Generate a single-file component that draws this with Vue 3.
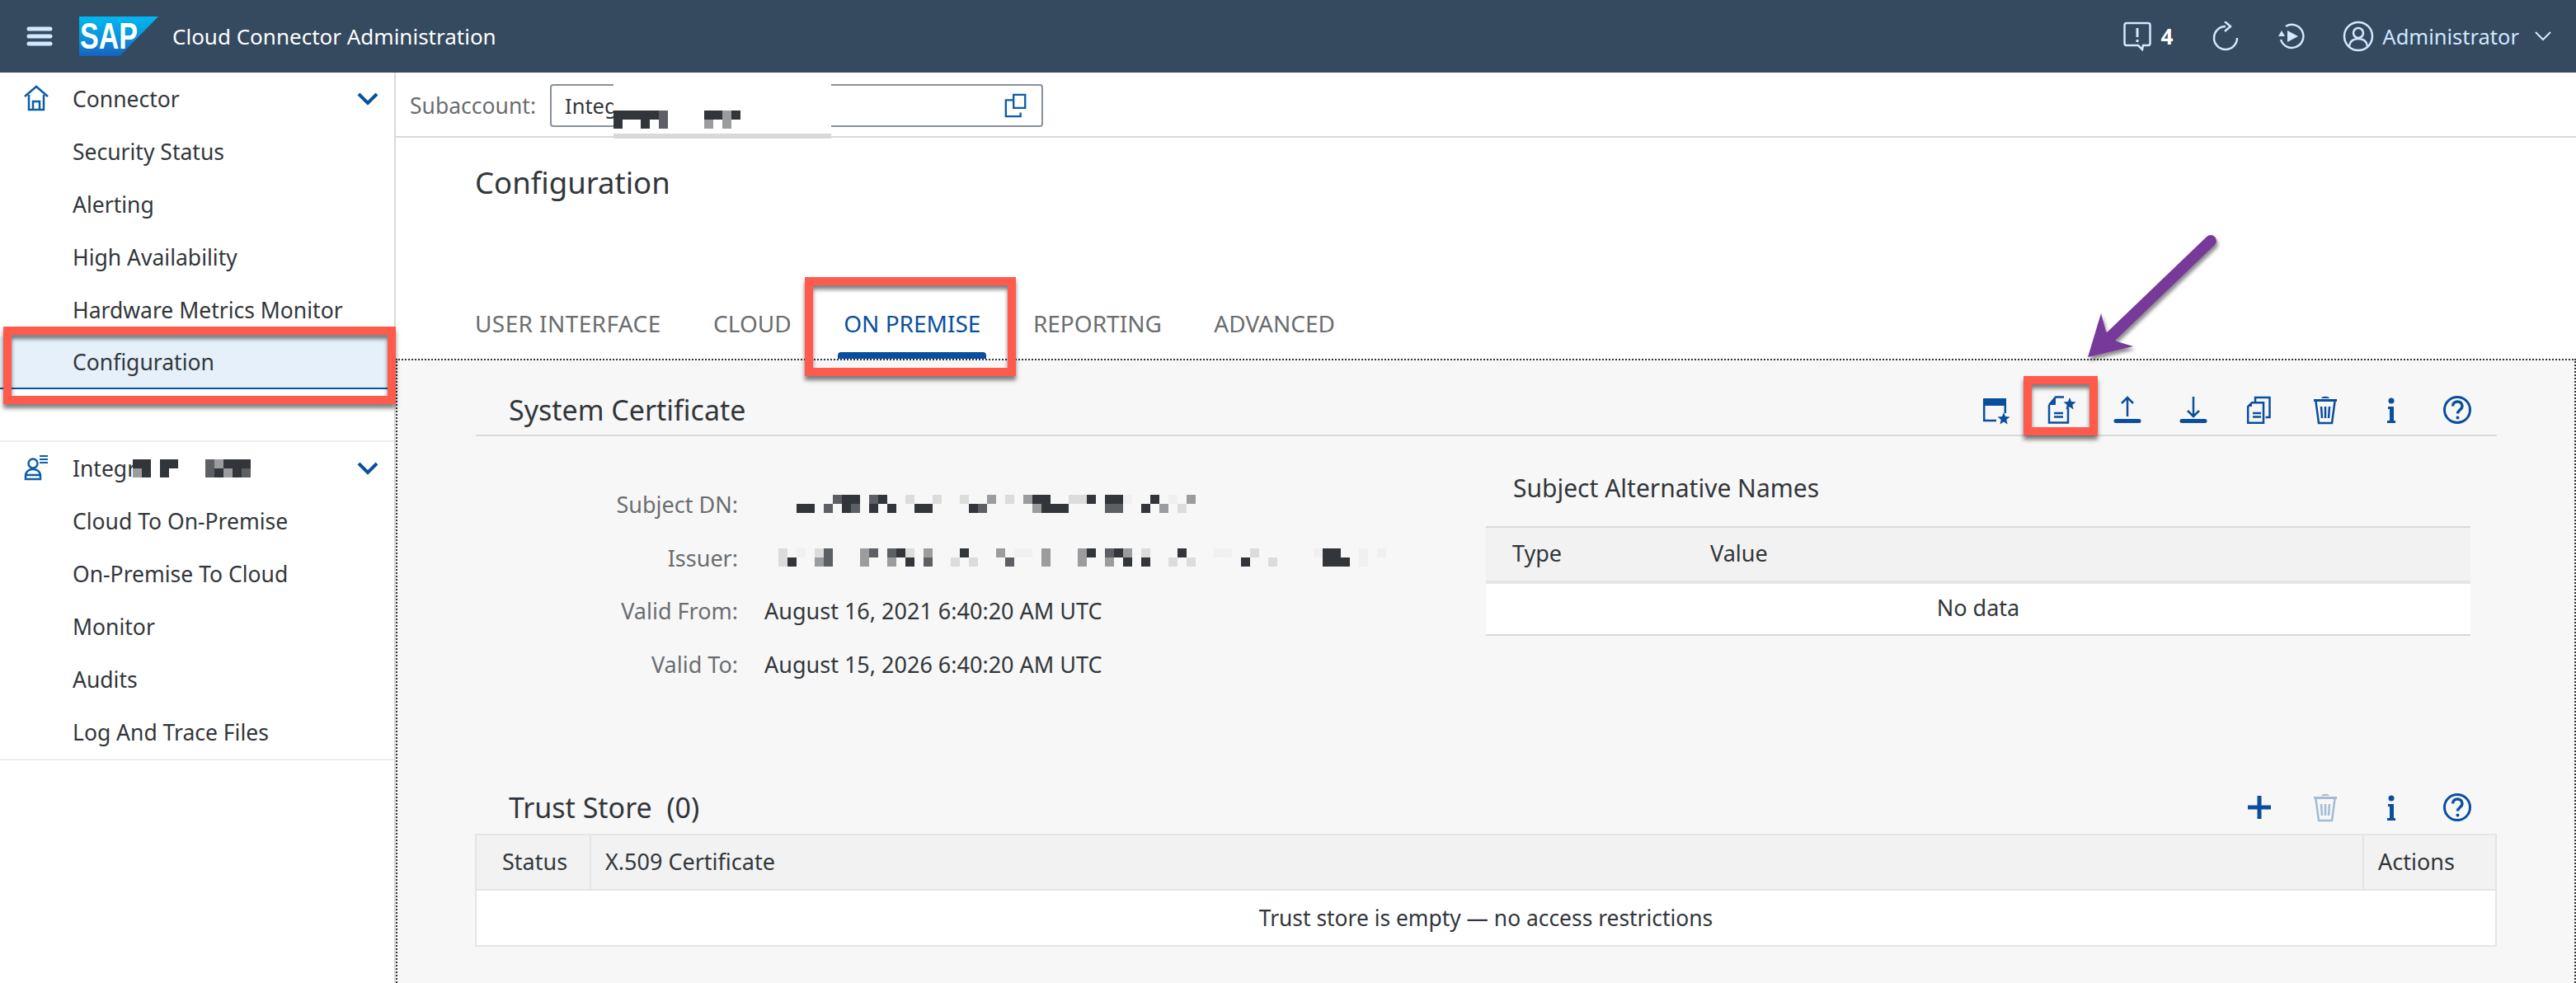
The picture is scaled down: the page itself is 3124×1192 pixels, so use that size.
<script setup>
const palette = { d: '#32363a', g: '#5c5f63', m: '#9a9c9e', l: '#dcdcdc', v: '#f0f0f0', '.': 'transparent' }
const cellsOf = (rows) => rows.flatMap((row) => [...row].map((c) => palette[c]))
const mosaics = {
  sub: { cols: 14, cells: cellsOf(['dddddg....ddmd', 'd..d.g....m.m.']) },
  integ: { cols: 13, cells: cellsOf(['dd.dd...gmddd', 'md.d....gdmdg']) },
  dn: { cols: 44, cells: cellsOf(['....gdd.gd..l..l..l..m.l.mdd..lld.ddv..d.v.m', 'dd.g.dg.d.d..dd....dg.....mddd....gg..d.m.l.']) },
  issuer: { cols: 67, cells: cellsOf(['l.v.lg...mg.gdl.m...d...m.vv.m...md.gdm.l...d...vv..l......vdd..v.v', 'ld..mg...m..m.d.g..l.l...g...m...m..m.d.d..l.l.....d..l.....ddd.v..']) },
}
const gridStyle = (m) => ({ gridTemplateColumns: `repeat(${m.cols}, 11px)` })
const connectorItems = ['Security Status', 'Alerting', 'High Availability', 'Hardware Metrics Monitor', 'Configuration']
const integItems = ['Cloud To On-Premise', 'On-Premise To Cloud', 'Monitor', 'Audits', 'Log And Trace Files']
const tabs = ['USER INTERFACE', 'CLOUD', 'ON PREMISE', 'REPORTING', 'ADVANCED']
</script>

<template>
  <div class="page">
    <header class="shell">
      <svg class="burger" viewBox="0 0 32 24"><path d="M3 3h26M3 12h26M3 21h26" /></svg>
      <svg class="logo" viewBox="0 0 96 48">
        <defs><linearGradient id="sapg" x1="0" y1="0" x2="0" y2="1"><stop offset="0" stop-color="#00b8f1" /><stop offset="0.6" stop-color="#0a8fdc" /><stop offset="1" stop-color="#1661be" /></linearGradient></defs>
        <path d="M0 0h96L49 48H0z" fill="url(#sapg)" />
        <text x="1" y="39" class="logo-text" textLength="70" lengthAdjust="spacingAndGlyphs">SAP</text>
      </svg>
      <span class="shell-title">Cloud Connector Administration</span>
      <div class="shell-right">
        <svg class="sh-icon" viewBox="0 0 36 36"><path d="M5 2h26a2.500 2.500 0 0 1 2.500 2.500v22a2.500 2.500 0 0 1-2.500 2.500h-6l-1 5-5-5H5a2.500 2.500 0 0 1-2.500-2.500v-22A2.500 2.500 0 0 1 5 2z" /><path d="M18 8v11M18 22v3" stroke-width="3" /></svg>
        <b class="count">4</b>
        <svg class="sh-icon refresh" viewBox="0 0 36 36"><path d="M32 20A14 14 0 1 1 18 6" /><path d="M17 0l7 6-7 6" /></svg>
        <svg class="sh-icon replay" viewBox="0 0 36 36"><path d="M11 6A14 14 0 1 1 5 22" /><path d="M13 11l13 7-13 7z" class="fill" /><path d="M2 18l4-7 4 7z" class="fill" /></svg>
        <svg class="sh-icon user" viewBox="0 0 38 38"><circle cx="19" cy="19" r="17" /><circle cx="19" cy="15" r="6" /><path d="M8 31c1-7 6-9 11-9s10 2 11 9" /></svg>
        <span class="admin">Administrator</span>
        <svg class="sh-chev" viewBox="0 0 20 12"><path d="M1 1l9 9 9-9" /></svg>
      </div>
    </header>

    <div class="body">
      <aside class="side">
        <section class="side-group">
          <div class="side-head">
            <svg class="side-icon" viewBox="0 0 32 32"><path d="M2 14L16 2l14 12M7 12v18h18V12M12 30V20h8v10" /></svg>
            <span>Connector</span>
            <svg class="side-chev" viewBox="0 0 26 16"><path d="M2 2l11 11L24 2" /></svg>
          </div>
          <div v-for="item in connectorItems" :key="item" class="side-item" :class="{ selected: item === 'Configuration' }">{{ item }}</div>
        </section>
        <section class="side-group second">
          <div class="side-head">
            <svg class="side-icon" viewBox="0 0 32 32"><circle cx="12" cy="11" r="5.500" /><path d="M3 30v-4c0-5 4-8 9-8s9 3 9 8v4zM3 25h18" /><path d="M20 2h10M20 6h10M20 10h10" stroke-width="2" /></svg>
            <span class="integ-name">Integr</span>
            <div class="mosaic" :style="gridStyle(mosaics.integ)"><i v-for="(c, i) in mosaics.integ.cells" :key="i" :style="{ background: c }" /></div>
            <svg class="side-chev" viewBox="0 0 26 16"><path d="M2 2l11 11L24 2" /></svg>
          </div>
          <div v-for="item in integItems" :key="item" class="side-item">{{ item }}</div>
        </section>
      </aside>

      <main class="main">
        <div class="subbar">
          <label>Subaccount:</label>
          <div class="select">
            <span class="select-text">Integ</span>
            <svg class="copy-icon" viewBox="0 0 30 32"><path d="M12 2h15v17H12zM12 9H2v21h19v-5" /></svg>
            <div class="patch"><div class="mosaic" :style="gridStyle(mosaics.sub)"><i v-for="(c, i) in mosaics.sub.cells" :key="i" :style="{ background: c }" /></div></div>
          </div>
        </div>
        <div class="page-head">
          <h1>Configuration</h1>
          <nav class="tabs">
            <a v-for="t in tabs" :key="t" :class="{ active: t === 'ON PREMISE' }">{{ t }}</a>
          </nav>
        </div>
        <div class="panel">
          <div class="sec-head">
            <h2>System Certificate</h2>
            <div class="tools">
              <svg class="tool" viewBox="0 0 40 36"><path d="M5 4h28v9H5z" class="fill nost" /><path d="M6.200 5v26H21M31.800 5v17" /><path d="M30 21l2 5 5.500.5-4.200 3.600 1.300 5.400-4.600-2.900-4.600 2.900 1.300-5.400-4.200-3.600 5.500-.5z" class="fill nost" /></svg>
              <svg class="tool" viewBox="0 0 40 36"><path d="M5 12L13 2.500h10M5 12v21.500h23V16" /><path d="M5 12l8-9v9z" class="fill nost" /><path d="M11 22h11M11 26.500h11" /><path d="M30 3l2 5 5.500.5-4.200 3.600 1.300 5.400-4.600-2.900-4.600 2.900 1.300-5.400-4.200-3.600 5.500-.5z" class="fill nost" /></svg>
              <svg class="tool" viewBox="0 0 40 36"><path d="M20 26V3M13 10l7-7 7 7" /><path d="M6 31.500h28" class="thick" /></svg>
              <svg class="tool" viewBox="0 0 40 36"><path d="M20 2v24M13 19l7 7 7-7" /><path d="M6 31.500h28" class="thick" /></svg>
              <svg class="tool" viewBox="0 0 40 36"><path d="M15 8V3h17.500v24h-5" /><path d="M11 9.200h14v24.600H6.200V14z" /><path d="M6 14l5-5v5z" class="fill nost" /><path d="M12 22h10M12 26.500h10" /></svg>
              <svg class="tool" viewBox="0 0 40 36"><path d="M6 6.500h28" class="thick2" /><path d="M15 4c1-3 9-3 10 0z" class="fill nost" /><path d="M8.500 8l3.500 26h16l3.500-26" /><path d="M15 14l1 14M20 14v14M25 14l-1 14" /></svg>
              <svg class="tool" viewBox="0 0 40 36"><circle cx="20" cy="7" r="3.500" class="fill nost" /><path d="M16 14h7v17h2v3H15v-3h3V17h-2z" class="fill nost" /></svg>
              <svg class="tool" viewBox="0 0 40 36"><circle cx="20" cy="18" r="15.500" stroke-width="3" /><path d="M14.500 13.500c0-7.500 11.500-7.500 11.500 0 0 4.500-5.500 4.500-5.500 9" class="q" /><circle cx="20.500" cy="27.500" r="2" class="fill nost" /></svg>
            </div>
          </div>
          <div class="cert">
            <dl class="fields">
              <dt>Subject DN:</dt>
              <dd class="dn"><div class="mosaic" :style="gridStyle(mosaics.dn)"><i v-for="(c, i) in mosaics.dn.cells" :key="i" :style="{ background: c }" /></div></dd>
              <dt>Issuer:</dt>
              <dd class="iss"><div class="mosaic" :style="gridStyle(mosaics.issuer)"><i v-for="(c, i) in mosaics.issuer.cells" :key="i" :style="{ background: c }" /></div></dd>
              <dt>Valid From:</dt>
              <dd>August 16, 2021 6:40:20 AM UTC</dd>
              <dt>Valid To:</dt>
              <dd>August 15, 2026 6:40:20 AM UTC</dd>
            </dl>
            <div class="san">
              <h3>Subject Alternative Names</h3>
              <div class="san-table">
                <div class="san-head"><span class="col-type">Type</span><span>Value</span></div>
                <div class="san-row">No data</div>
              </div>
            </div>
          </div>
          <div class="trust-head">
            <h2>Trust Store&nbsp; (0)</h2>
            <div class="tools">
              <svg class="tool" viewBox="0 0 40 36"><path d="M20 4v28M6 18h28" class="thick3" /></svg>
              <svg class="tool faded" viewBox="0 0 40 36"><path d="M6 6.500h28" class="thick2" /><path d="M15 4c1-3 9-3 10 0z" class="fill nost" /><path d="M8.500 8l3.500 26h16l3.500-26" /><path d="M15 14l1 14M20 14v14M25 14l-1 14" /></svg>
              <svg class="tool" viewBox="0 0 40 36"><circle cx="20" cy="7" r="3.500" class="fill nost" /><path d="M16 14h7v17h2v3H15v-3h3V17h-2z" class="fill nost" /></svg>
              <svg class="tool" viewBox="0 0 40 36"><circle cx="20" cy="18" r="15.500" stroke-width="3" /><path d="M14.500 13.500c0-7.500 11.500-7.500 11.500 0 0 4.500-5.500 4.500-5.500 9" class="q" /><circle cx="20.500" cy="27.500" r="2" class="fill nost" /></svg>
            </div>
          </div>
          <div class="trust-table">
            <div class="trust-cols"><span class="c-status">Status</span><span class="c-cert">X.509 Certificate</span><span class="c-act">Actions</span></div>
            <div class="trust-row">Trust store is empty — no access restrictions</div>
          </div>
        </div>
      </main>
    </div>

    <div class="mark box-side" />
    <div class="mark box-tab" />
    <div class="mark box-tool" />
    <svg class="arrow" viewBox="0 0 200 180">
      <path d="M185 12L64 128" class="shaft" />
      <path d="M36 153L52 100L58 122L71 134L91 140z" class="head" />
    </svg>
  </div>
</template>

<style>
html, body { margin: 0; background: #fff; overflow: hidden; }
</style>

<style scoped>
.page { position: relative; width: 3124px; height: 1192px; overflow: hidden; font-family: "Noto Sans", sans-serif; font-size: 26.500px; color: #32363a; background: #fff; }
.shell { height: 88px; background: #354a5f; display: flex; align-items: center; padding-left: 32px; box-sizing: border-box; color: #fff; }
.burger { width: 32px; height: 24px; fill: none; stroke: #d1e8ff; stroke-width: 5; stroke-linecap: round; }
.logo { width: 96px; height: 48px; margin-left: 32px; }
.logo-text { font-family: "Liberation Sans", sans-serif; font-weight: 700; font-size: 44px; fill: #fff; }
.shell-title { margin-left: 17px; font-size: 26px; }
.shell-right { margin-left: auto; display: flex; align-items: center; color: #d1e8ff; padding-right: 30px; }
.sh-icon { width: 36px; height: 36px; fill: none; stroke: #d1e8ff; stroke-width: 2.500; }
.sh-icon .fill { fill: #d1e8ff; stroke: none; }
.count { color: #fff; margin-left: 10px; font-size: 26px; }
.refresh { margin-left: 46px; }
.replay { margin-left: 44px; }
.user { margin-left: 44px; width: 38px; height: 38px; }
.admin { margin-left: 10px; font-size: 25.500px; }
.sh-chev { width: 20px; height: 12px; margin-left: 19px; fill: none; stroke: #d1e8ff; stroke-width: 2; }

.body { display: flex; height: 1104px; }
.side { width: 480px; box-sizing: border-box; flex: none; border-right: 2px solid #d9d9d9; }
.side-group { border-bottom: 2px solid #ededed; padding-bottom: 62px; }
.side-group.second { padding-bottom: 0; }
.side-head { height: 64px; display: flex; align-items: center; position: relative; padding-left: 88px; }
.side-icon { position: absolute; left: 28px; top: 15px; width: 32px; height: 32px; fill: none; stroke: #0a5ea8; stroke-width: 2.500; }
.side-chev { position: absolute; right: 19px; top: 24px; width: 26px; height: 16px; fill: none; stroke: #0a4f9e; stroke-width: 4; }
.side-item { height: 64px; line-height: 64px; padding-left: 88px; box-sizing: border-box; }
.side-item.selected { background: #e5f0fa; border-bottom: 2px solid #0a4f9e; line-height: 62px; }
.integ-name { width: 73px; }
.mosaic { display: inline-grid; grid-auto-rows: 11px; }
.mosaic i { display: block; }

.main { flex: 1; min-width: 0; display: flex; flex-direction: column; }
.subbar { height: 79px; box-sizing: border-box; border-bottom: 2px solid #d9d9d9; display: flex; align-items: center; padding: 2px 0 0 17px; }
.subbar label { color: #6a6d70; font-size: 26.500px; }
.select { position: relative; margin-left: 17px; width: 598px; height: 52px; box-sizing: border-box; border: 2px solid #89919a; border-radius: 4px; display: flex; align-items: center; justify-content: space-between; padding: 0 16px 0 16px; font-size: 25.500px; }
.copy-icon { width: 30px; height: 30px; fill: none; stroke: #0a5ea8; stroke-width: 2.500; }
.patch { position: absolute; left: 75px; top: -4px; width: 264px; height: 68px; box-sizing: border-box; background: #fff; border-bottom: 6px solid #d9d9d9; padding-top: 18px; }

.page-head { height: 268px; box-sizing: border-box; padding: 29px 0 0 96px; display: flex; flex-direction: column; }
h1 { margin: 0; font-size: 36.500px; font-weight: 400; line-height: 50px; }
.tabs { display: flex; gap: 63.500px; margin-top: auto; height: 86px; }
.tabs a { color: #6a6d70; font-size: 28px; line-height: 86px; position: relative; }
.tabs a:first-child { letter-spacing: 0.4px; }
.tabs a.active { color: #0a4f9e; }
.tabs a.active::after { content: ""; position: absolute; left: -7px; right: -7px; bottom: 0; height: 8px; border-radius: 4px 4px 0 0; background: #0a4f9e; }

.panel { flex: 1; background: #f7f7f7; border-top: 2px dotted #32363a; border-left: 2px dotted #32363a; border-right: 2px dotted #32363a; padding: 0 94px 0 95px; min-height: 0; }
.sec-head { height: 92px; box-sizing: border-box; display: flex; align-items: center; justify-content: space-between; border-bottom: 2px solid #d9d9d9; padding: 30px 28px 0 40px; }
h2 { margin: 0; font-size: 34px; font-weight: 400; }
.tools { display: flex; gap: 40px; }
.tool { height: 36px; width: 40px; flex: none; fill: none; stroke: #0a4f9e; stroke-width: 2.500; }
.tool .fill { fill: #0a4f9e; }
.tool .nost { stroke: none; }
.tool .thick { stroke-width: 5; stroke-linecap: round; }
.tool .thick2 { stroke-width: 3; }
.tool .thick3 { stroke-width: 5; }
.tool .q { stroke-width: 3.500; }
.tool.faded { opacity: 0.35; }

.cert { display: flex; height: 418px; }
.fields { margin: 51px 0 0; display: grid; grid-template-columns: 318px auto; column-gap: 32px; grid-auto-rows: 64.500px; align-items: start; width: 1225px; font-size: 27px; flex: none; align-content: start; }
.fields dt { color: #6a6d70; text-align: right; line-height: 64px; }
.fields dd { margin: 0; line-height: 64px; white-space: nowrap; }
.fields .dn { padding: 20px 0 0 39px; line-height: 0; }
.fields .iss { padding: 20px 0 0 17px; line-height: 0; }
.san h3 { margin: 0; padding: 43px 0 0 33px; font-size: 30px; font-weight: 400; line-height: 40px; height: 109px; box-sizing: border-box; }
.san-table { width: 1194px; border-bottom: 2px solid #d9d9d9; }
.san-head { background: #f2f2f2; border-top: 2px solid #d9d9d9; border-bottom: 4px solid #e5e5e5; height: 70px; box-sizing: border-box; display: flex; align-items: center; padding: 0 0 4px 32px; font-size: 27px; }
.col-type { width: 240px; }
.san-row { background: #fff; height: 61px; line-height: 58px; text-align: center; font-size: 27px; }

.trust-head { height: 64px; display: flex; align-items: center; justify-content: space-between; padding: 0 28px 0 40px; }
.trust-table { border: 2px solid #e5e5e5; margin-left: -1px; }
.trust-cols { background: #f2f2f2; display: flex; height: 67px; border-bottom: 2px solid #e5e5e5; box-sizing: border-box; font-size: 27px; line-height: 63px; }
.c-status { width: 139px; padding-left: 31px; box-sizing: border-box; border-right: 2px solid #e5e5e5; }
.c-cert { flex: 1; padding-left: 17px; }
.c-act { width: 161px; padding-left: 17px; box-sizing: border-box; border-left: 2px solid #e5e5e5; }
.trust-row { background: #fff; height: 66px; line-height: 66px; text-align: center; font-size: 26.400px; }

.mark { position: absolute; box-sizing: border-box; border: 10px solid #ff5a4c; box-shadow: 0 5px 5px rgba(0,0,0,.5), inset 0 5px 5px rgba(0,0,0,.5); }
.box-side { left: 4px; top: 396px; width: 476px; height: 94px; }
.box-tab { left: 976px; top: 336px; width: 256px; height: 120px; }
.box-tool { left: 2454px; top: 456px; width: 90px; height: 72px; }
.arrow { position: absolute; left: 2496px; top: 280px; width: 200px; height: 180px; overflow: visible; filter: drop-shadow(2px 4px 2px rgba(0,0,0,.45)); }
.shaft { fill: none; stroke: #783a9a; stroke-width: 14; stroke-linecap: round; }
.head { fill: #783a9a; }
</style>
